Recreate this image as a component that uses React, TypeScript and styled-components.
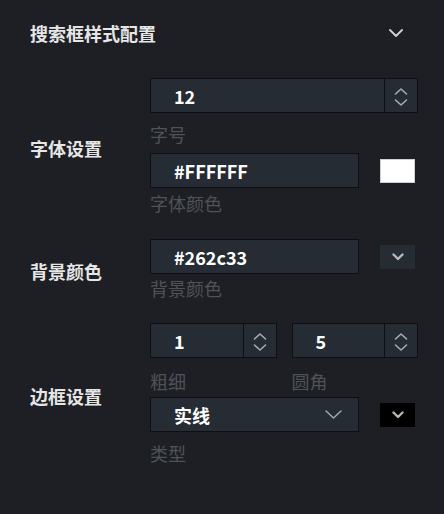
import React from "react";
import styled, { createGlobalStyle } from "styled-components";

const GlobalStyle = createGlobalStyle`
  html, body { margin: 0; padding: 0; background: #1d1f24; }
  body { font-family: "Noto Sans CJK SC", "Noto Sans", sans-serif; }
  * { box-sizing: border-box; }
`;

const Panel = styled.div`
  width: 444px;
  height: 514px;
  background: #1d1f24;
  padding: 0 26px 0 30px;
`;

const Header = styled.div`
  height: 66px;
  display: flex;
  align-items: center;
  justify-content: space-between;
  padding-right: 15px;
`;

const Title = styled.div`
  font-size: 18px;
  line-height: 18px;
  font-weight: 700;
  color: #e6e6e6;
`;

const Section = styled.div<{ $mt: number }>`
  display: grid;
  grid-template-columns: 120px 1fr;
  margin-top: ${(p) => p.$mt}px;
`;

const Label = styled.div`
  align-self: center;
  padding-top: 6px;
  font-size: 18px;
  line-height: 18px;
  font-weight: 700;
  color: #e6e6e6;
`;

const Fields = styled.div`
  display: flex;
  flex-direction: column;
`;

const Caption = styled.div<{ $mt: number }>`
  margin-top: ${(p) => p.$mt}px;
  font-size: 18px;
  line-height: 18px;
  color: #4f5257;
`;

const Row = styled.div<{ $mt?: number }>`
  display: flex;
  align-items: center;
  gap: 21px;
  margin-top: ${(p) => p.$mt ?? 0}px;
`;

const Pair = styled.div`
  display: grid;
  grid-template-columns: 1fr 1fr;
  gap: 15px;
`;

const Column = styled.div`
  display: flex;
  flex-direction: column;
`;

const Box = styled.div<{ $w?: number }>`
  display: flex;
  align-items: stretch;
  height: 35px;
  width: ${(p) => (p.$w ? `${p.$w}px` : "100%")};
  background: #262c33;
  border: 1px solid #0e0f12;
  flex-shrink: 0;
`;

const Value = styled.div`
  flex: 1;
  display: flex;
  align-items: center;
  padding-left: 23px;
  font-size: 18px;
  font-weight: 700;
  color: #ffffff;
`;

const Stepper = styled.div`
  width: 33px;
  border-left: 1px solid #0e0f12;
  display: flex;
  align-items: center;
  justify-content: center;
  padding-top: 2px;
`;

const SelectArrow = styled.div`
  display: flex;
  align-items: center;
  padding-right: 16px;
`;

const Swatch = styled.div<{ $bg: string; $border: string }>`
  width: 35px;
  height: 24px;
  background: ${(p) => p.$bg};
  border: 1px solid ${(p) => p.$border};
  display: flex;
  align-items: center;
  justify-content: center;
`;

const StepIcon = () => (
  <svg width="14" height="20" viewBox="0 0 14 20" fill="none">
    <polyline points="1.5,7 7,2 12.5,7" stroke="#a9abae" strokeWidth="1.6" strokeLinecap="round" strokeLinejoin="round" />
    <polyline points="1.5,13 7,18 12.5,13" stroke="#a9abae" strokeWidth="1.6" strokeLinecap="round" strokeLinejoin="round" />
  </svg>
);

const HeaderChevron = () => (
  <svg width="14" height="8" viewBox="0 0 14 8" fill="none">
    <polyline points="1,1 7,7 13,1" stroke="#d2d2d2" strokeWidth="1.8" strokeLinecap="round" strokeLinejoin="round" />
  </svg>
);

const ThinChevron = () => (
  <svg width="17" height="9" viewBox="0 0 17 9" fill="none">
    <polyline points="1,1 8.5,8 16,1" stroke="#a9abae" strokeWidth="1.4" strokeLinecap="round" strokeLinejoin="round" />
  </svg>
);

const BoldChevron = () => (
  <svg width="12" height="8" viewBox="0 0 12 8" fill="none">
    <polyline points="1.5,1.5 6,6 10.5,1.5" stroke="#b5b7ba" strokeWidth="2.4" strokeLinecap="round" strokeLinejoin="round" />
  </svg>
);

const NumberInput = ({ value, w }: { value: string; w?: number }) => (
  <Box $w={w}>
    <Value>{value}</Value>
    <Stepper>
      <StepIcon />
    </Stepper>
  </Box>
);

export default function App() {
  return (
    <>
      <GlobalStyle />
      <Panel>
        <Header>
          <Title>搜索框样式配置</Title>
          <HeaderChevron />
        </Header>

        <Section $mt={12}>
          <Label>字体设置</Label>
          <Fields>
            <NumberInput value="12" />
            <Caption $mt={12}>字号</Caption>
            <Row $mt={10}>
              <Box $w={209}>
                <Value>#FFFFFF</Value>
              </Box>
              <Swatch $bg="#ffffff" $border="#cfcfcf" />
            </Row>
            <Caption $mt={6}>字体颜色</Caption>
          </Fields>
        </Section>

        <Section $mt={27}>
          <Label>背景颜色</Label>
          <Fields>
            <Row>
              <Box $w={209}>
                <Value>#262c33</Value>
              </Box>
              <Swatch $bg="#262c33" $border="#262c33">
                <BoldChevron />
              </Swatch>
            </Row>
            <Caption $mt={5}>背景颜色</Caption>
          </Fields>
        </Section>

        <Section $mt={26}>
          <Label>边框设置</Label>
          <Fields>
            <Pair>
              <Column>
                <NumberInput value="1" />
                <Caption $mt={14}>粗细</Caption>
              </Column>
              <Column>
                <NumberInput value="5" />
                <Caption $mt={14}>圆角</Caption>
              </Column>
            </Pair>
            <Row $mt={7}>
              <Box $w={209}>
                <Value>实线</Value>
                <SelectArrow>
                  <ThinChevron />
                </SelectArrow>
              </Box>
              <Swatch $bg="#000000" $border="#000000">
                <BoldChevron />
              </Swatch>
            </Row>
            <Caption $mt={12}>类型</Caption>
          </Fields>
        </Section>
      </Panel>
    </>
  );
}
